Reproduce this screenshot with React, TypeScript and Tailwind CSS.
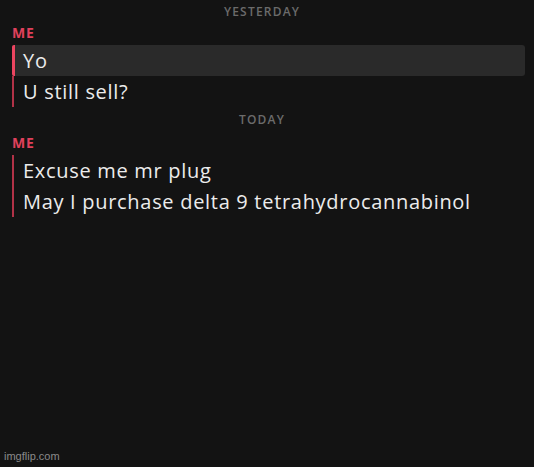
import React from "react";

function Day({ label }: { label: string }) {
  return (
    <div className="h-[16px] flex items-center justify-center pr-[10px] text-[12px] font-semibold tracking-[0.1em] text-[#6b6b6b]">
      {label}
    </div>
  );
}

function Me() {
  return (
    <div className="h-[18px] flex items-center pl-[12px] text-[14px] font-bold tracking-[0.06em] text-[#e0415c]">
      ME
    </div>
  );
}

function Msg({ text, active }: { text: string; active?: boolean }) {
  return (
    <div className={"h-[31px] flex items-stretch ml-[12px] mr-[9px] " + (active ? "bg-[#2a2a2a] rounded-[3px]" : "")}>
      <div className={active ? "w-[3px] bg-[#ec4560] rounded-l-[2px]" : "w-[2px] bg-[#b23247]"} />
      <div className={"flex items-center text-[20px] tracking-[0.7px] text-[#ececec] " + (active ? "pl-[8px]" : "pl-[9px]")}>{text}</div>
    </div>
  );
}

export default function App() {
  return (
    <div
      className="w-[534px] h-[467px] bg-[#131313] relative overflow-hidden"
      style={{ fontFamily: '"Open Sans", "Noto Sans", sans-serif' }}
    >
      <div className="pt-[4px]">
        <Day label="YESTERDAY" />
        <div className="h-[3px]" />
        <Me />
        <div className="h-[4px]" />
        <Msg text="Yo" active />
        <Msg text="U still sell?" />
        <div className="h-[5px]" />
        <Day label="TODAY" />
        <div className="h-[5px]" />
        <Me />
        <div className="h-[4px]" />
        <Msg text="Excuse me mr plug" />
        <Msg text="May I purchase delta 9 tetrahydrocannabinol" />
      </div>
      <div className="absolute left-[4px] bottom-[3px] text-[11px] text-[#8a8a8a]" style={{ fontFamily: '"Liberation Sans", Arial, sans-serif' }}>
        imgflip.com
      </div>
    </div>
  );
}
